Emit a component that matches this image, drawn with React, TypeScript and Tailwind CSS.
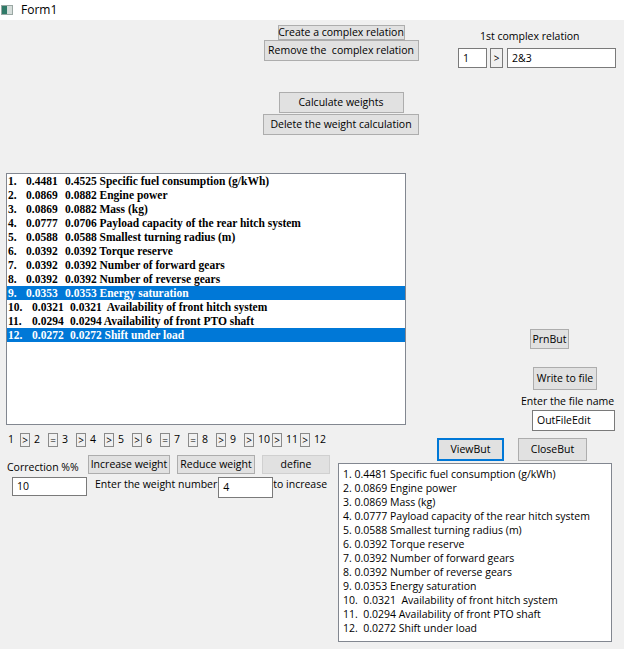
import clsx from "clsx";

const LEFT_ITEMS = [
  ["1.", "0.4481", "0.4525 Specific fuel consumption (g/kWh)"],
  ["2.", "0.0869", "0.0882 Engine power"],
  ["3.", "0.0869", "0.0882 Mass (kg)"],
  ["4.", "0.0777", "0.0706 Payload capacity of the rear hitch system"],
  ["5.", "0.0588", "0.0588 Smallest turning radius (m)"],
  ["6.", "0.0392", "0.0392 Torque reserve"],
  ["7.", "0.0392", "0.0392 Number of forward gears"],
  ["8.", "0.0392", "0.0392 Number of reverse gears"],
  ["9.", "0.0353", "0.0353 Energy saturation"],
  ["10.", "0.0321", "0.0321  Availability of front hitch system"],
  ["11.", "0.0294", "0.0294 Availability of front PTO shaft"],
  ["12.", "0.0272", "0.0272 Shift under load"],
];

const RIGHT_ITEMS = [
  "1. 0.4481 Specific fuel consumption (g/kWh)",
  "2. 0.0869 Engine power",
  "3. 0.0869 Mass (kg)",
  "4. 0.0777 Payload capacity of the rear hitch system",
  "5. 0.0588 Smallest turning radius (m)",
  "6. 0.0392 Torque reserve",
  "7. 0.0392 Number of forward gears",
  "8. 0.0392 Number of reverse gears",
  "9. 0.0353 Energy saturation",
  "10.  0.0321  Availability of front hitch system",
  "11.  0.0294 Availability of front PTO shaft",
  "12.  0.0272 Shift under load",
];

const SIGNS = [">", "=", ">", ">", ">", "=", "=", ">", ">", ">", ">"];

const btn =
  "flex items-center justify-center bg-[#e1e1e1] border border-[#adadad] text-[10.5px] leading-none text-black whitespace-nowrap";
const edit =
  "flex items-center bg-white border border-[#7a7a7a] px-[4px] text-[10.5px] leading-none text-black";

export default function App() {
  return (
    <div className="flex h-[649px] w-[624px] flex-col overflow-hidden bg-[#f0f0f0] font-['Open_Sans',sans-serif] text-black">
      {/* title bar */}
      <div className="flex h-[20px] shrink-0 items-center gap-[8px] bg-white pl-[1px]">
        <div className="flex h-[10px] w-[12px] border border-[#9aa7a3]">
          <div className="w-[5px] bg-[#2f7a68]" />
          <div className="flex-1 bg-[#d6dedb]" />
        </div>
        <span className="text-[12px]">Form1</span>
      </div>

      {/* top controls */}
      <div className="flex h-[153px] shrink-0">
        <div className="ml-[261px] flex w-[160px] flex-col items-center pt-[5px]">
          <button className={clsx(btn, "h-[15px] w-[127px]")}>
            Create a complex relation
          </button>
          <button className={clsx(btn, "h-[21px] w-[155px]")}>
            Remove the&nbsp; complex relation
          </button>
          <button className={clsx(btn, "mt-[31px] h-[21px] w-[125px]")}>
            Calculate weights
          </button>
          <button className={clsx(btn, "mt-[1px] h-[21px] w-[156px]")}>
            Delete the weight calculation
          </button>
        </div>

        <div className="ml-[37px] flex flex-col pt-[9px]">
          <span className="pl-[22px] text-[10.5px] leading-[15px]">
            1st complex relation
          </span>
          <div className="mt-[4px] flex">
            <div className={clsx(edit, "h-[20px] w-[29px]")}>1</div>
            <div className="ml-[3px] flex h-[20px] w-[13px] items-center justify-center border border-[#7a7a7a] text-[10px]">
              &gt;
            </div>
            <div className={clsx(edit, "ml-[4px] h-[20px] w-[109px]")}>2&amp;3</div>
          </div>
        </div>
      </div>

      {/* weights list + file controls */}
      <div className="flex h-[258px] shrink-0">
        <div className="ml-[6px] h-[252px] w-[400px] border border-[#828790] bg-white font-['Liberation_Serif',serif] text-[11.5px] font-bold">
          {LEFT_ITEMS.map(([num, a, rest], i) => {
            const selected = i === 8 || i === 11;
            const wide = i >= 9;
            return (
              <div
                key={num}
                className={clsx(
                  "flex h-[14px] items-center whitespace-pre pl-[1px] leading-[14px]",
                  selected ? "bg-[#0078d7] text-white" : "text-black"
                )}
              >
                <span className={wide ? "w-[24px]" : "w-[18px]"}>{num}</span>
                <span className={wide ? "w-[38px]" : "w-[39px]"}>{a}</span>
                <span>{rest}</span>
              </div>
            );
          })}
        </div>

        <div className="flex flex-col">
          <button className={clsx(btn, "ml-[124px] mt-[156px] h-[20px] w-[39px]")}>
            PrnBut
          </button>
          <button className={clsx(btn, "ml-[127px] mt-[18px] h-[23px] w-[64px]")}>
            Write to file
          </button>
          <span className="ml-[115px] mt-[4px] text-[10.5px] leading-[15px]">
            Enter the file name
          </span>
          <div className={clsx(edit, "ml-[126px] mt-[1px] h-[21px] w-[83px]")}>
            OutFileEdit
          </div>
        </div>
      </div>

      {/* bottom */}
      <div className="flex flex-1">
        <div className="flex w-[338px] flex-col">
          <div className="mt-[2px] flex h-[14px] items-center pl-[7px] text-[10.5px]">
            <span className="w-[13px] pl-[1px]">1</span>
            {SIGNS.map((s, i) => (
              <div key={i} className="flex items-center">
                <div className="flex h-[14px] w-[10px] items-center justify-center border border-[#8a8a8a] text-[10px] leading-none">
                  {s}
                </div>
                <span className="w-[18px] pl-[4px]">{i + 2}</span>
              </div>
            ))}
          </div>

          <div className="mt-[8px] flex items-end">
            <span className="ml-[7px] w-[81px] text-[10.5px] leading-[14px]">
              Correction %%
            </span>
            <button className={clsx(btn, "h-[19px] w-[82px]")}>Increase weight</button>
            <button className={clsx(btn, "ml-[7px] h-[19px] w-[78px]")}>Reduce weight</button>
            <button className="ml-[7px] flex h-[19px] w-[68px] items-center justify-center border border-[#d0d0d0] bg-[#e1e1e1] text-[10.5px] leading-none">
              define
            </button>
          </div>

          <div className="mt-[3px] flex items-start">
            <div className={clsx(edit, "ml-[12px] h-[19px] w-[75px]")}>10</div>
            <span className="ml-[8px] text-[10.5px] leading-[15px]">
              Enter the weight number
            </span>
            <div className={clsx(edit, "ml-[1px] h-[21px] w-[55px]")}>4</div>
            <span className="text-[10.5px] leading-[15px]">to increase</span>
          </div>
        </div>

        <div className="flex flex-col">
          <div className="mt-[7px] flex">
            <button className="ml-[99px] flex h-[23px] w-[67px] items-center justify-center border border-[#0078d7] bg-[#e1e1e1] text-[10.5px] leading-none shadow-[inset_0_0_0_1px_#0078d7]">
              ViewBut
            </button>
            <button className={clsx(btn, "ml-[14px] h-[23px] w-[69px]")}>CloseBut</button>
          </div>
          <div className="mt-[2px] h-[179px] w-[274px] border border-[#828790] bg-white pl-[4px] pt-[3px] text-[10.5px]">
            {RIGHT_ITEMS.map((t) => (
              <div key={t} className="h-[14px] whitespace-pre leading-[14px]">
                {t}
              </div>
            ))}
          </div>
        </div>
      </div>
    </div>
  );
}
